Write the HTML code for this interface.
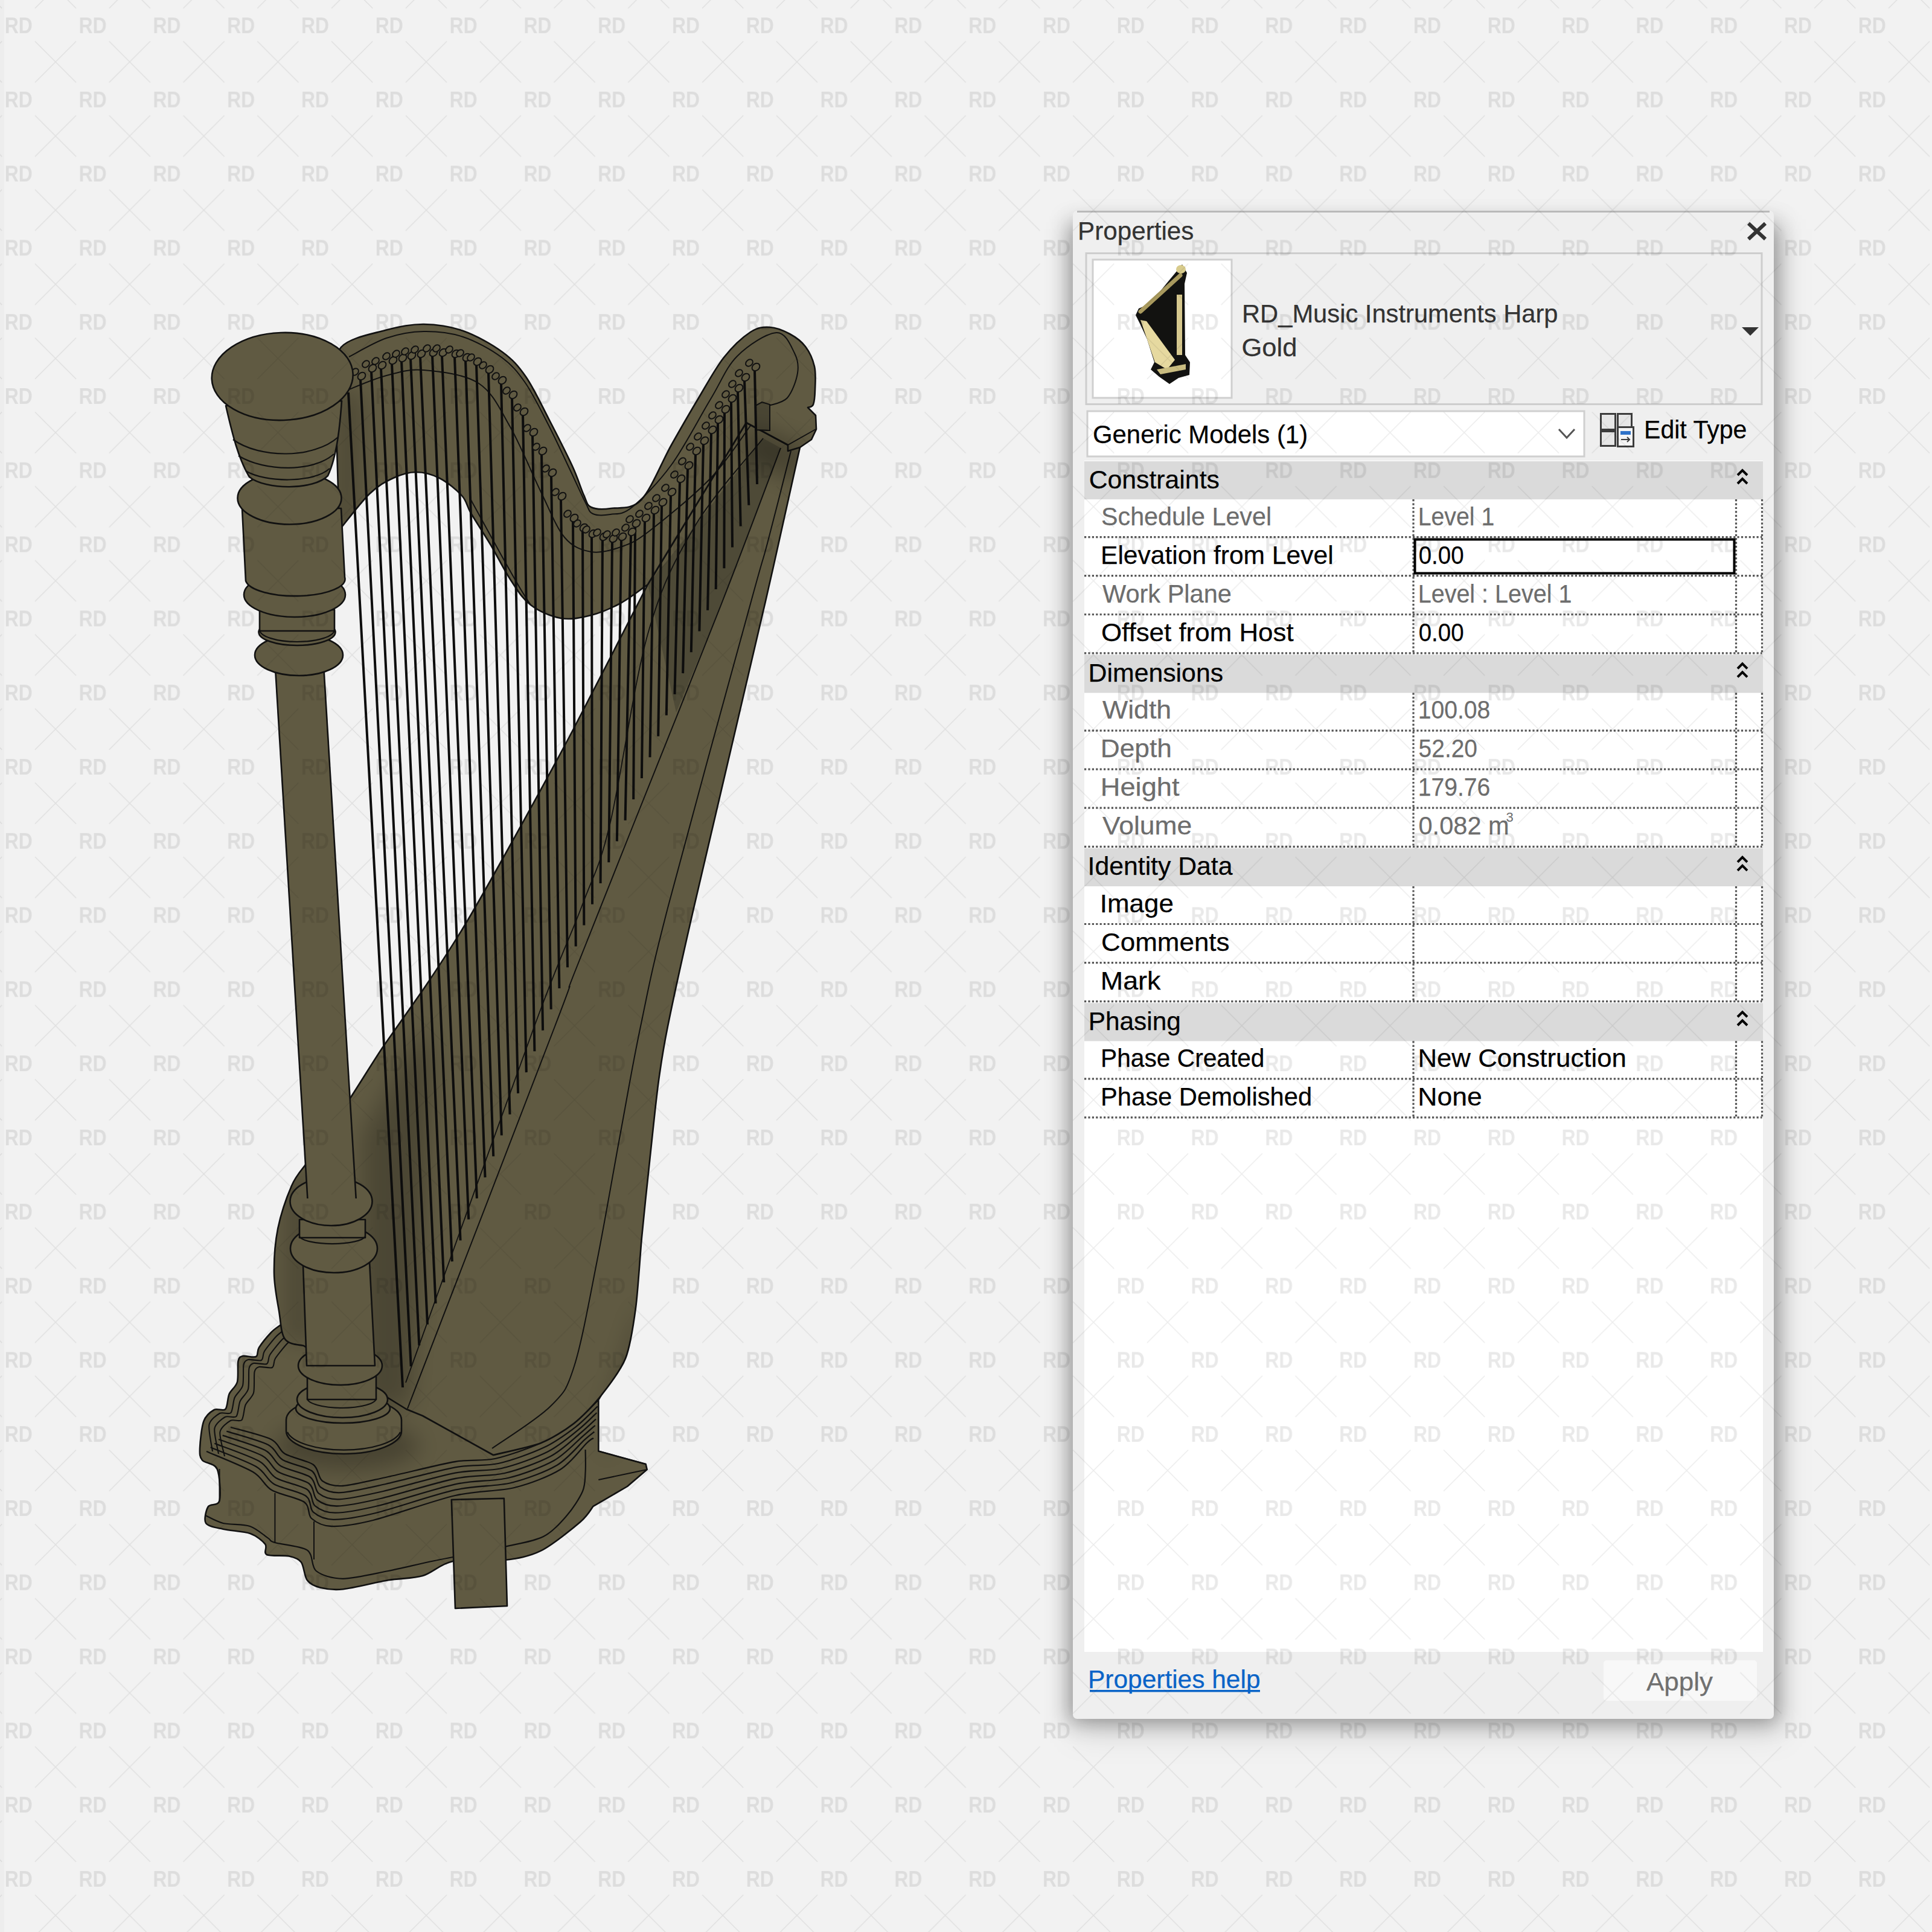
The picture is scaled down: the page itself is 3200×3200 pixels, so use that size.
<!DOCTYPE html>
<html><head><meta charset="utf-8"><style>
html,body{margin:0;padding:0;width:3200px;height:3200px;overflow:hidden;background:#f2f2f2}
svg{position:absolute;left:0;top:0;display:block}
text{font-family:"Liberation Sans",sans-serif}
</style></head><body>
<svg width="3200" height="3200" viewBox="0 0 3200 3200">
<defs>
<pattern id="wm" x="5" y="20" width="122.8" height="122.8" patternUnits="userSpaceOnUse">
<text x="3" y="34.5" font-size="36" font-weight="bold" transform="scale(0.89,1)" fill="#000" fill-opacity="0.085">RD</text>
<path d="M53 48.5 L121 116.5 M121 48.5 L53 116.5" stroke="#000" stroke-opacity="0.075" stroke-width="1.5"/>
</pattern>
<filter id="shd" x="-10%" y="-10%" width="120%" height="120%"><feGaussianBlur stdDeviation="17"/></filter>
<filter id="shd2" x="-10%" y="-10%" width="120%" height="120%"><feGaussianBlur stdDeviation="26"/></filter>
</defs>
<rect width="3200" height="3200" fill="#f2f2f2"/>
<rect x="0" y="0" width="7" height="3200" fill="#000" fill-opacity="0.02"/>
<g id="harp">
<path d="M464.0 2195.0 C461.8 2196.8 454.2 2201.4 449.0 2207.0 C443.8 2212.6 432.8 2226.0 429.0 2232.0 C425.2 2238.0 428.1 2244.9 424.0 2247.0 C419.9 2249.1 406.4 2244.9 402.0 2246.0 C397.6 2247.1 395.9 2248.1 394.5 2254.5 C393.1 2260.9 395.2 2280.8 393.0 2289.0 C390.8 2297.2 382.5 2302.2 379.6 2309.0 C376.7 2315.8 377.1 2330.1 373.4 2334.0 C369.7 2337.9 360.2 2332.0 354.8 2335.0 C349.4 2338.0 341.0 2344.5 337.4 2354.0 C333.8 2363.5 331.4 2388.9 331.0 2398.6 C330.6 2408.3 330.7 2413.3 335.0 2418.5 C339.3 2423.7 355.5 2423.3 359.8 2433.4 C364.1 2443.5 365.8 2476.3 363.5 2485.6 C361.2 2494.9 348.2 2489.9 344.8 2495.5 C341.4 2501.1 337.3 2517.3 341.0 2522.9 C344.7 2528.5 358.7 2530.2 369.7 2532.8 C380.7 2535.4 404.0 2536.3 414.4 2540.0 C424.8 2543.7 435.2 2552.3 439.3 2557.6 C443.4 2562.8 435.7 2572.0 441.7 2575.0 C447.7 2578.0 470.4 2575.6 479.0 2577.5 C487.6 2579.4 494.4 2581.5 498.9 2587.5 C503.4 2593.5 504.0 2611.0 508.8 2617.3 C513.6 2623.6 522.1 2627.5 531.0 2629.7 C539.9 2631.9 551.6 2634.1 568.4 2632.2 C585.2 2630.3 623.3 2620.6 643.0 2617.3 C662.7 2614.0 684.0 2614.7 700.0 2610.0 C716.0 2605.3 729.8 2589.9 750.0 2586.0 C770.2 2582.1 812.9 2586.6 834.8 2584.0 C856.7 2581.4 876.8 2578.1 895.7 2568.7 C914.6 2559.2 948.0 2532.1 961.0 2521.0 C974.0 2509.9 979.4 2498.7 982.6 2494.8 L1039 2462 L1071.7 2434 L1069.6 2425 L991.3 2403.5 L991.3 2318.7 L1026 2260 L800 2250 Z" fill="#605a42" stroke="#111" stroke-width="2.6" stroke-linejoin="round" />
<path d="M382.0 2364.0 C392.1 2367.0 435.5 2377.4 449.0 2384.0 C462.5 2390.6 461.5 2401.7 472.0 2408.0 C482.5 2414.3 509.7 2419.2 519.0 2426.0 C528.3 2432.8 526.6 2447.8 534.0 2453.0 C541.4 2458.2 551.6 2462.1 568.0 2461.0 C584.4 2459.9 615.1 2452.0 643.0 2446.0 C670.9 2440.0 727.5 2425.5 754.0 2421.0 C780.5 2416.5 798.7 2420.7 820.0 2416.0 C841.3 2411.3 876.5 2398.7 896.0 2390.0 C915.5 2381.3 935.8 2368.7 950.0 2358.0 C964.2 2347.3 984.9 2324.8 991.0 2319.0" fill="none" stroke="#111" stroke-width="2.3" stroke-linejoin="round" />
<path d="M375.3 2370.7 C385.6 2374.0 430.1 2385.9 444.0 2393.0 C457.9 2400.1 457.5 2411.5 468.3 2418.0 C479.2 2424.5 507.1 2429.5 516.5 2436.3 C525.9 2443.1 523.8 2458.0 531.0 2463.3 C538.2 2468.7 548.7 2473.0 564.8 2472.2 C581.0 2471.4 610.5 2464.3 638.8 2458.0 C667.2 2451.7 726.0 2435.4 754.0 2430.3 C782.0 2425.2 803.2 2428.9 825.3 2424.0 C847.4 2419.1 882.1 2406.4 901.3 2397.3 C920.6 2388.2 940.4 2373.5 953.7 2363.3 C966.9 2353.2 984.3 2334.6 989.7 2329.5" fill="none" stroke="#111" stroke-width="2.3" stroke-linejoin="round" />
<path d="M368.7 2377.3 C379.2 2381.0 424.6 2394.4 439.0 2402.0 C453.4 2409.6 453.4 2421.3 464.7 2428.0 C475.9 2434.7 504.5 2439.8 514.0 2446.7 C523.5 2453.5 520.9 2468.2 528.0 2473.7 C535.1 2479.2 545.7 2483.9 561.7 2483.3 C577.7 2482.8 605.8 2476.6 634.7 2470.0 C663.5 2463.4 724.6 2445.4 754.0 2439.7 C783.4 2434.0 807.8 2437.2 830.7 2432.0 C853.6 2426.8 887.7 2414.2 906.7 2404.7 C925.7 2395.2 945.1 2378.4 957.3 2368.7 C969.6 2359.0 983.7 2344.3 988.3 2340.0" fill="none" stroke="#111" stroke-width="2.3" stroke-linejoin="round" />
<path d="M362.0 2384.0 C372.8 2388.1 419.1 2402.9 434.0 2411.0 C448.9 2419.1 449.4 2431.1 461.0 2438.0 C472.6 2444.9 501.9 2450.1 511.5 2457.0 C521.1 2463.9 518.0 2478.4 525.0 2484.0 C532.0 2489.6 542.7 2494.8 558.5 2494.5 C574.3 2494.2 601.2 2488.8 630.5 2482.0 C659.8 2475.2 723.2 2455.3 754.0 2449.0 C784.8 2442.7 812.3 2445.6 836.0 2440.0 C859.7 2434.4 893.2 2421.9 912.0 2412.0 C930.8 2402.1 949.8 2383.2 961.0 2374.0 C972.2 2364.8 983.1 2354.0 987.0 2350.5" fill="none" stroke="#111" stroke-width="2.3" stroke-linejoin="round" />
<path d="M355.3 2390.7 C366.4 2395.1 413.7 2411.4 429.0 2420.0 C444.3 2428.6 445.3 2440.9 457.3 2448.0 C469.3 2455.1 499.3 2460.4 509.0 2467.3 C518.7 2474.3 515.0 2488.6 522.0 2494.3 C529.0 2500.1 539.7 2505.7 555.3 2505.7 C571.0 2505.6 596.5 2501.1 626.3 2494.0 C656.1 2486.9 721.8 2465.2 754.0 2458.3 C786.2 2451.4 816.8 2453.8 841.3 2448.0 C865.8 2442.2 898.8 2429.6 917.3 2419.3 C935.8 2409.0 954.4 2388.1 964.7 2379.3 C974.9 2370.6 982.5 2363.8 985.7 2361.0" fill="none" stroke="#111" stroke-width="2.3" stroke-linejoin="round" />
<path d="M348.7 2397.3 C360.0 2402.1 408.2 2419.9 424.0 2429.0 C439.8 2438.1 441.3 2450.7 453.7 2458.0 C466.0 2465.3 496.7 2470.7 506.5 2477.7 C516.3 2484.7 512.1 2498.8 519.0 2504.7 C525.9 2510.5 536.7 2516.6 552.2 2516.8 C567.6 2517.0 591.9 2513.4 622.2 2506.0 C652.4 2498.6 720.3 2475.2 754.0 2467.7 C787.7 2460.2 821.4 2462.2 846.7 2456.0 C872.0 2449.8 904.4 2437.4 922.7 2426.7 C940.9 2416.0 959.1 2392.9 968.3 2384.7 C977.6 2376.4 981.9 2373.5 984.3 2371.5" fill="none" stroke="#111" stroke-width="2.3" stroke-linejoin="round" />
<path d="M342.0 2404.0 C353.6 2409.1 402.8 2428.4 419.0 2438.0 C435.2 2447.6 437.2 2460.5 450.0 2468.0 C462.8 2475.5 494.1 2480.9 504.0 2488.0 C513.9 2495.1 509.2 2509.0 516.0 2515.0 C522.8 2521.0 533.7 2527.6 549.0 2528.0 C564.3 2528.4 587.2 2525.7 618.0 2518.0 C648.8 2510.3 718.9 2485.1 754.0 2477.0 C789.1 2468.9 825.9 2470.4 852.0 2464.0 C878.1 2457.6 910.0 2445.1 928.0 2434.0 C946.0 2422.9 963.8 2397.8 972.0 2390.0 C980.2 2382.2 981.4 2383.2 983.0 2382.0" fill="none" stroke="#111" stroke-width="2.3" stroke-linejoin="round" />
<path d="M473.0 2201.0 C471.0 2202.6 462.7 2208.1 458.0 2213.0 C453.3 2217.9 441.3 2232.7 438.0 2238.0 C434.7 2243.3 436.6 2251.1 433.0 2253.0 C429.4 2254.9 414.9 2251.0 411.0 2252.0 C407.1 2253.0 404.7 2254.8 403.5 2260.5 C402.3 2266.2 404.0 2287.7 402.0 2295.0 C400.0 2302.3 391.2 2309.0 388.6 2315.0 C386.0 2321.0 385.7 2336.5 382.4 2340.0 C379.1 2343.5 368.6 2338.3 363.8 2341.0 C359.0 2343.7 348.0 2351.6 346.4 2360.0 C344.8 2368.4 351.3 2398.1 352.0 2404.0" fill="none" stroke="#111" stroke-width="2.1" stroke-linejoin="round" />
<path d="M482.0 2207.0 C480.0 2208.6 471.7 2214.1 467.0 2219.0 C462.3 2223.9 450.3 2238.7 447.0 2244.0 C443.7 2249.3 445.6 2257.1 442.0 2259.0 C438.4 2260.9 423.9 2257.0 420.0 2258.0 C416.1 2259.0 413.7 2260.8 412.5 2266.5 C411.3 2272.2 413.0 2293.7 411.0 2301.0 C409.0 2308.3 400.2 2315.0 397.6 2321.0 C395.0 2327.0 394.7 2342.5 391.4 2346.0 C388.1 2349.5 377.6 2344.3 372.8 2347.0 C368.0 2349.7 356.8 2357.9 355.4 2366.0 C354.0 2374.1 361.1 2402.4 362.0 2408.0" fill="none" stroke="#111" stroke-width="2.1" stroke-linejoin="round" />
<path d="M491.0 2213.0 C489.0 2214.6 480.7 2220.1 476.0 2225.0 C471.3 2229.9 459.3 2244.7 456.0 2250.0 C452.7 2255.3 454.6 2263.1 451.0 2265.0 C447.4 2266.9 432.9 2263.0 429.0 2264.0 C425.1 2265.0 422.7 2266.8 421.5 2272.5 C420.3 2278.2 422.0 2299.7 420.0 2307.0 C418.0 2314.3 409.2 2321.0 406.6 2327.0 C404.0 2333.0 403.7 2348.5 400.4 2352.0 C397.1 2355.5 386.6 2350.3 381.8 2353.0 C377.0 2355.7 365.7 2364.1 364.4 2372.0 C363.1 2379.9 371.0 2406.7 372.0 2412.0" fill="none" stroke="#111" stroke-width="2.1" stroke-linejoin="round" />
<path d="M363.5 2433.0 L363.5 2486.0" fill="none" stroke="#111" stroke-width="2" stroke-linejoin="round" />
<path d="M455.4 2473.0 L455.4 2555.0" fill="none" stroke="#111" stroke-width="2" stroke-linejoin="round" />
<path d="M520.0 2520.0 L520.0 2583.0" fill="none" stroke="#111" stroke-width="2" stroke-linejoin="round" />
<path d="M341.0 2510.4 C345.3 2512.3 358.8 2520.4 369.7 2523.0 C380.6 2525.6 402.9 2524.3 414.0 2528.0 C425.1 2531.7 437.9 2543.6 444.0 2547.7 C450.1 2551.8 445.2 2552.0 455.0 2555.0 C464.8 2558.0 498.7 2560.5 509.0 2567.6 C519.3 2574.7 514.9 2594.9 523.7 2602.0 C532.6 2609.1 550.1 2614.8 568.0 2614.8 C585.9 2614.8 620.2 2606.5 643.0 2602.0 C665.8 2597.5 691.2 2591.0 720.0 2585.0 C748.8 2579.0 807.8 2568.0 834.8 2562.0 C861.8 2556.0 884.4 2552.8 900.0 2545.0 C915.6 2537.2 929.2 2521.2 939.0 2510.0 C948.8 2498.8 960.4 2480.8 965.0 2470.0 C969.6 2459.2 968.9 2448.3 969.6 2438.0 C970.3 2427.7 969.6 2406.6 969.6 2401.0" fill="none" stroke="#111" stroke-width="2.2" stroke-linejoin="round" />
<path d="M991.3 2403.5 L1069.6 2425.0" fill="none" stroke="#111" stroke-width="2" stroke-linejoin="round" />
<path d="M991.3 2451.0 L1071.7 2434.0" fill="none" stroke="#111" stroke-width="2" stroke-linejoin="round" />
<path d="M747.8 2484.0 L834.8 2481.7 L840.0 2660.0 L754.0 2664.0 Z" fill="#605a42" stroke="#111" stroke-width="2.6" stroke-linejoin="round" />
<path d="M1325.0 741.0 C1317.3 775.5 1290.3 898.8 1267.0 1000.0 C1243.7 1101.2 1171.5 1406.7 1150.0 1500.0 C1128.5 1593.3 1114.0 1660.4 1106.0 1700.0 C1098.0 1739.6 1094.1 1765.9 1090.0 1797.0 C1085.9 1828.1 1078.6 1899.4 1075.0 1933.0 C1071.4 1966.6 1065.9 2017.9 1063.0 2049.0 C1060.1 2080.1 1056.6 2139.2 1053.0 2166.0 C1049.4 2192.8 1043.9 2230.3 1036.0 2250.0 C1028.1 2269.7 1005.0 2299.6 993.5 2314.0 C982.0 2328.4 963.0 2347.9 950.0 2358.0 C937.0 2368.1 913.7 2383.1 896.0 2390.0 C878.3 2396.9 827.5 2407.3 817.0 2410.0 L700 2345 L673 2334 L503 2229  C497.8 2227.2 478.8 2227.7 472.0 2218.0 C465.2 2208.3 465.0 2189.2 462.0 2171.0 C459.0 2152.8 454.3 2131.5 454.0 2109.0 C453.7 2086.5 455.2 2060.2 460.0 2036.0 C464.8 2011.8 475.3 1981.8 483.0 1964.0 C490.7 1946.2 502.2 1934.8 506.0 1929.0  C513.2 1918.3 565.3 1841.3 578.0 1822.0 C590.7 1802.7 620.3 1754.9 633.0 1736.0 C645.7 1717.1 691.3 1653.4 705.0 1633.0 C718.7 1612.6 756.0 1555.3 770.0 1532.0 C784.0 1508.7 827.2 1432.1 845.0 1400.0 C862.8 1367.9 925.2 1254.2 948.0 1211.0 C970.8 1167.8 1060.5 992.3 1073.0 968.0 L1236 700 L1305 737 Z" fill="#605a42" stroke="#111" stroke-width="2.6" stroke-linejoin="round" />
<path d="M1264.0 726.0 L1293.0 742.0 L1195.0 1000.0 L1120.0 1180.0 L1073.0 968.0 L1150.0 873.0 Z" fill="#4e4a37" stroke="none"/>
<path d="M1293.0 742.0 C1276.7 785.0 1235.7 896.0 1195.0 1000.0 C1154.3 1104.0 1089.8 1263.5 1049.0 1366.0 C1008.2 1468.5 971.7 1559.3 950.0 1615.0 C928.3 1670.7 964.8 1580.3 919.0 1700.0 C873.2 1819.7 715.7 2227.5 675.0 2333.0" fill="none" stroke="#111" stroke-width="2" stroke-linejoin="round" />
<path d="M1310.0 747.0 C1303.5 772.5 1282.2 857.8 1271.0 900.0 C1259.8 942.2 1270.3 900.0 1243.0 1000.0 C1215.7 1100.0 1137.3 1383.3 1107.0 1500.0 C1076.7 1616.7 1074.2 1637.5 1061.0 1700.0 C1047.8 1762.5 1040.0 1810.3 1028.0 1875.0 C1016.0 1939.7 1001.8 2023.3 989.0 2088.0 C976.2 2152.7 963.8 2222.8 951.0 2263.0 C938.2 2303.2 934.7 2306.3 912.0 2329.0 C889.3 2351.7 831.2 2387.3 815.0 2399.0" fill="none" stroke="#111" stroke-width="2" stroke-linejoin="round" />
<path d="M1264.0 726.0 C1245.0 750.5 1181.8 819.0 1150.0 873.0 C1118.2 927.0 1096.3 967.8 1073.0 1050.0 C1049.7 1132.2 1028.2 1291.0 1010.0 1366.0 C991.8 1441.0 984.8 1444.3 964.0 1500.0 C943.2 1555.7 933.7 1568.3 885.0 1700.0 C836.3 1831.7 707.5 2191.7 672.0 2290.0" fill="none" stroke="#111" stroke-width="1.8" stroke-linejoin="round" />
<path d="M555.0 640.0 C556.7 629.2 551.2 590.5 565.0 575.0 C578.8 559.5 615.2 553.3 638.0 547.0 C660.8 540.7 680.5 536.8 702.0 537.0 C723.5 537.2 745.3 540.3 767.0 548.0 C788.7 555.7 814.7 570.3 832.0 583.0 C849.3 595.7 858.2 605.5 871.0 624.0 C883.8 642.5 896.2 669.3 909.0 694.0 C921.8 718.7 938.3 751.0 948.0 772.0 C957.7 793.0 961.8 808.7 967.0 820.0 C972.2 831.3 971.5 836.3 979.0 840.0 C986.5 843.7 998.2 844.0 1012.0 842.0 C1025.8 840.0 1045.3 845.5 1062.0 828.0 C1078.7 810.5 1096.3 764.8 1112.0 737.0 C1127.7 709.2 1141.5 685.2 1156.0 661.0 C1170.5 636.8 1184.5 610.5 1199.0 592.0 C1213.5 573.5 1230.3 558.3 1243.0 550.0 C1255.7 541.7 1264.2 541.5 1275.0 542.0 C1285.8 542.5 1298.2 547.7 1308.0 553.0 C1317.8 558.3 1327.2 565.0 1334.0 574.0 C1340.8 583.0 1346.3 595.2 1349.0 607.0 C1351.7 618.8 1350.3 634.5 1350.0 645.0 C1349.7 655.5 1349.0 665.0 1347.0 670.0 C1345.0 675.0 1339.5 674.2 1338.0 675.0 L1351.0 688.0 L1352.0 711.0 L1344.0 728.0 L1325.0 741.0 L1305.0 747.0 L1305.0 737.0 L1236.0 700.0 L1073 968  C1065.5 973.2 1043.7 990.5 1028.0 999.0 C1012.3 1007.5 995.5 1014.8 979.0 1019.0 C962.5 1023.2 945.7 1026.8 929.0 1024.0 C912.3 1021.2 892.8 1012.5 879.0 1002.0 C865.2 991.5 857.0 977.5 846.0 961.0 C835.0 944.5 824.0 921.5 813.0 903.0 C802.0 884.5 788.0 863.7 780.0 850.0 C772.0 836.3 773.7 830.7 765.0 821.0 C756.3 811.3 740.7 798.5 728.0 792.0 C715.3 785.5 701.8 782.0 689.0 782.0 C676.2 782.0 663.8 786.0 651.0 792.0 C638.2 798.0 626.8 803.7 612.0 818.0 C597.2 832.3 570.3 868.0 562.0 878.0 Z" fill="#605a42" stroke="#111" stroke-width="2.6" stroke-linejoin="round" />
<path d="M578.0 591.0 C588.3 585.8 619.3 567.0 640.0 560.0 C660.7 553.0 680.8 549.3 702.0 549.0 C723.2 548.7 745.5 550.8 767.0 558.0 C788.5 565.2 813.8 579.3 831.0 592.0 C848.2 604.7 857.2 615.5 870.0 634.0 C882.8 652.5 895.5 678.7 908.0 703.0 C920.5 727.3 934.7 758.3 945.0 780.0 C955.3 801.7 963.8 821.2 970.0 833.0 C976.2 844.8 975.2 847.8 982.0 851.0 C988.8 854.2 1000.2 853.8 1011.0 852.0 C1021.8 850.2 1030.2 853.7 1047.0 840.0 C1063.8 826.3 1090.3 799.8 1112.0 770.0 C1133.7 740.2 1158.8 691.0 1177.0 661.0 C1195.2 631.0 1202.8 608.3 1221.0 590.0 C1239.2 571.7 1270.2 551.8 1286.0 551.0 C1301.8 550.2 1310.2 573.8 1316.0 585.0 C1321.8 596.2 1323.0 605.7 1321.0 618.0 C1319.0 630.3 1312.0 650.0 1304.0 659.0 C1296.0 668.0 1278.2 669.8 1273.0 672.0" fill="none" stroke="#111" stroke-width="2" stroke-linejoin="round" />
<path d="M578.0 645.0 C588.3 641.2 619.3 627.3 640.0 622.0 C660.7 616.7 676.5 610.8 702.0 613.0 C727.5 615.2 769.2 619.3 793.0 635.0 C816.8 650.7 827.8 677.0 845.0 707.0 C862.2 737.0 881.0 784.5 896.0 815.0 C911.0 845.5 921.2 873.5 935.0 890.0 C948.8 906.5 963.5 911.3 979.0 914.0 C994.5 916.7 1012.0 911.7 1028.0 906.0 C1044.0 900.3 1050.2 899.0 1075.0 880.0 C1099.8 861.0 1149.0 821.2 1177.0 792.0 C1205.0 762.8 1232.0 719.5 1243.0 705.0" fill="none" stroke="#111" stroke-width="2" stroke-linejoin="round" />
<path d="M780.0 828.0 C788.3 843.2 816.2 894.2 830.0 919.0 C843.8 943.8 854.8 963.2 863.0 977.0 C871.2 990.8 876.3 997.8 879.0 1002.0" fill="none" stroke="#111" stroke-width="2" stroke-linejoin="round" />
<path d="M1236.0 700.0 L1305.0 737.0 L1351.0 711.0" fill="none" stroke="#111" stroke-width="2" stroke-linejoin="round" />
<path d="M1251.0 712.0 L1251.0 672.0 L1262.0 666.0 L1275.0 670.0 L1275.0 713.0 Z" fill="#4a4634" stroke="#111" stroke-width="2"/>
<defs><clipPath id="hclip"><path d="M464.0 2195.0 C461.8 2196.8 454.2 2201.4 449.0 2207.0 C443.8 2212.6 432.8 2226.0 429.0 2232.0 C425.2 2238.0 428.1 2244.9 424.0 2247.0 C419.9 2249.1 406.4 2244.9 402.0 2246.0 C397.6 2247.1 395.9 2248.1 394.5 2254.5 C393.1 2260.9 395.2 2280.8 393.0 2289.0 C390.8 2297.2 382.5 2302.2 379.6 2309.0 C376.7 2315.8 377.1 2330.1 373.4 2334.0 C369.7 2337.9 360.2 2332.0 354.8 2335.0 C349.4 2338.0 341.0 2344.5 337.4 2354.0 C333.8 2363.5 331.4 2388.9 331.0 2398.6 C330.6 2408.3 330.7 2413.3 335.0 2418.5 C339.3 2423.7 355.5 2423.3 359.8 2433.4 C364.1 2443.5 365.8 2476.3 363.5 2485.6 C361.2 2494.9 348.2 2489.9 344.8 2495.5 C341.4 2501.1 337.3 2517.3 341.0 2522.9 C344.7 2528.5 358.7 2530.2 369.7 2532.8 C380.7 2535.4 404.0 2536.3 414.4 2540.0 C424.8 2543.7 435.2 2552.3 439.3 2557.6 C443.4 2562.8 435.7 2572.0 441.7 2575.0 C447.7 2578.0 470.4 2575.6 479.0 2577.5 C487.6 2579.4 494.4 2581.5 498.9 2587.5 C503.4 2593.5 504.0 2611.0 508.8 2617.3 C513.6 2623.6 522.1 2627.5 531.0 2629.7 C539.9 2631.9 551.6 2634.1 568.4 2632.2 C585.2 2630.3 623.3 2620.6 643.0 2617.3 C662.7 2614.0 684.0 2614.7 700.0 2610.0 C716.0 2605.3 729.8 2589.9 750.0 2586.0 C770.2 2582.1 812.9 2586.6 834.8 2584.0 C856.7 2581.4 876.8 2578.1 895.7 2568.7 C914.6 2559.2 948.0 2532.1 961.0 2521.0 C974.0 2509.9 979.4 2498.7 982.6 2494.8 L1039 2462 L1071.7 2434 L1069.6 2425 L991.3 2403.5 L991.3 2318.7 L1026 2260 L800 2250 Z"/><path d="M1325.0 741.0 C1317.3 775.5 1290.3 898.8 1267.0 1000.0 C1243.7 1101.2 1171.5 1406.7 1150.0 1500.0 C1128.5 1593.3 1114.0 1660.4 1106.0 1700.0 C1098.0 1739.6 1094.1 1765.9 1090.0 1797.0 C1085.9 1828.1 1078.6 1899.4 1075.0 1933.0 C1071.4 1966.6 1065.9 2017.9 1063.0 2049.0 C1060.1 2080.1 1056.6 2139.2 1053.0 2166.0 C1049.4 2192.8 1043.9 2230.3 1036.0 2250.0 C1028.1 2269.7 1005.0 2299.6 993.5 2314.0 C982.0 2328.4 963.0 2347.9 950.0 2358.0 C937.0 2368.1 913.7 2383.1 896.0 2390.0 C878.3 2396.9 827.5 2407.3 817.0 2410.0 L700 2345 L673 2334 L503 2229  C497.8 2227.2 478.8 2227.7 472.0 2218.0 C465.2 2208.3 465.0 2189.2 462.0 2171.0 C459.0 2152.8 454.3 2131.5 454.0 2109.0 C453.7 2086.5 455.2 2060.2 460.0 2036.0 C464.8 2011.8 475.3 1981.8 483.0 1964.0 C490.7 1946.2 502.2 1934.8 506.0 1929.0  C513.2 1918.3 565.3 1841.3 578.0 1822.0 C590.7 1802.7 620.3 1754.9 633.0 1736.0 C645.7 1717.1 691.3 1653.4 705.0 1633.0 C718.7 1612.6 756.0 1555.3 770.0 1532.0 C784.0 1508.7 827.2 1432.1 845.0 1400.0 C862.8 1367.9 925.2 1254.2 948.0 1211.0 C970.8 1167.8 1060.5 992.3 1073.0 968.0 L1236 700 L1305 737 Z"/><path d="M555.0 640.0 C556.7 629.2 551.2 590.5 565.0 575.0 C578.8 559.5 615.2 553.3 638.0 547.0 C660.8 540.7 680.5 536.8 702.0 537.0 C723.5 537.2 745.3 540.3 767.0 548.0 C788.7 555.7 814.7 570.3 832.0 583.0 C849.3 595.7 858.2 605.5 871.0 624.0 C883.8 642.5 896.2 669.3 909.0 694.0 C921.8 718.7 938.3 751.0 948.0 772.0 C957.7 793.0 961.8 808.7 967.0 820.0 C972.2 831.3 971.5 836.3 979.0 840.0 C986.5 843.7 998.2 844.0 1012.0 842.0 C1025.8 840.0 1045.3 845.5 1062.0 828.0 C1078.7 810.5 1096.3 764.8 1112.0 737.0 C1127.7 709.2 1141.5 685.2 1156.0 661.0 C1170.5 636.8 1184.5 610.5 1199.0 592.0 C1213.5 573.5 1230.3 558.3 1243.0 550.0 C1255.7 541.7 1264.2 541.5 1275.0 542.0 C1285.8 542.5 1298.2 547.7 1308.0 553.0 C1317.8 558.3 1327.2 565.0 1334.0 574.0 C1340.8 583.0 1346.3 595.2 1349.0 607.0 C1351.7 618.8 1350.3 634.5 1350.0 645.0 C1349.7 655.5 1349.0 665.0 1347.0 670.0 C1345.0 675.0 1339.5 674.2 1338.0 675.0 L1351.0 688.0 L1352.0 711.0 L1344.0 728.0 L1325.0 741.0 L1305.0 747.0 L1305.0 737.0 L1236.0 700.0 L1073 968  C1065.5 973.2 1043.7 990.5 1028.0 999.0 C1012.3 1007.5 995.5 1014.8 979.0 1019.0 C962.5 1023.2 945.7 1026.8 929.0 1024.0 C912.3 1021.2 892.8 1012.5 879.0 1002.0 C865.2 991.5 857.0 977.5 846.0 961.0 C835.0 944.5 824.0 921.5 813.0 903.0 C802.0 884.5 788.0 863.7 780.0 850.0 C772.0 836.3 773.7 830.7 765.0 821.0 C756.3 811.3 740.7 798.5 728.0 792.0 C715.3 785.5 701.8 782.0 689.0 782.0 C676.2 782.0 663.8 786.0 651.0 792.0 C638.2 798.0 626.8 803.7 612.0 818.0 C597.2 832.3 570.3 868.0 562.0 878.0 Z"/></clipPath><filter id="aob" x="-50%" y="-50%" width="200%" height="200%"><feGaussianBlur stdDeviation="18"/></filter></defs>
<g clip-path="url(#hclip)"><g filter="url(#aob)" fill="#000">
<path d="M600 1880 L700 1700 L720 1760 L680 2330 L600 2330 Z" fill-opacity="0.22"/>
<path d="M470 1960 L520 1940 L520 2230 L470 2220 Z" fill-opacity="0.18"/>
<ellipse cx="575" cy="2395" rx="120" ry="40" fill-opacity="0.25"/>
<path d="M1240 700 L1340 740 L1320 800 L1230 760 Z" fill-opacity="0.25"/>
<path d="M560 640 L600 660 L590 880 L555 880 Z" fill-opacity="0.2"/>
<path d="M1000 2330 L1060 2150 L1080 2300 L1000 2420 Z" fill-opacity="0.15"/>
</g></g>
<path d="M577.0 650.0 L667.0 2298.0 M597.0 628.0 L680.7 2263.2 M615.0 615.0 L694.3 2228.4 M631.0 610.0 L708.0 2193.6 M649.0 602.0 L721.6 2158.8 M665.0 598.0 L735.3 2124.0 M680.0 594.0 L748.9 2089.3 M696.0 591.0 L762.6 2054.5 M716.0 589.0 L776.2 2019.7 M732.0 589.0 L789.9 1984.9 M753.0 591.0 L803.5 1950.1 M771.0 597.0 L817.2 1915.3 M789.0 604.0 L830.8 1880.5 M809.0 617.0 L844.5 1845.7 M830.0 635.0 L858.1 1810.9 M848.0 659.0 L871.8 1776.1 M866.0 687.0 L885.4 1741.3 M882.0 721.0 L899.1 1706.6 M897.0 752.0 L912.7 1671.8 M913.0 788.0 L926.4 1637.0 M929.0 827.0 L940.0 1602.2 M949.0 863.0 L953.7 1567.4 M965.0 879.0 L967.3 1532.6 M980.0 889.0 L981.0 1497.8 M998.0 894.0 L994.6 1463.0 M1014.0 897.0 L1008.3 1428.2 M1029.0 894.0 L1021.9 1393.4 M1045.0 886.0 L1035.6 1358.7 M1052.0 872.0 L1049.2 1323.9 M1068.0 863.0 L1062.9 1289.1 M1083.0 850.0 L1076.5 1254.3 M1096.0 837.0 L1090.2 1219.5 M1111.0 820.0 L1103.8 1184.7 M1126.0 798.0 L1117.5 1149.9 M1139.0 776.0 L1131.1 1115.1 M1152.0 752.0 L1144.8 1080.3 M1165.0 735.0 L1158.4 1045.5 M1178.0 717.0 L1172.1 1010.7 M1189.0 700.0 L1185.7 976.0 M1200.0 683.0 L1199.4 941.2 M1211.0 665.0 L1213.0 906.4 M1222.0 648.0 L1226.7 871.6 M1233.0 630.0 L1240.3 836.8 M1250.0 613.0 L1254.0 802.0" stroke="#0d0d0d" stroke-width="4" fill="none"/>
<ellipse cx="588.0" cy="616.0" rx="6.5" ry="5" transform="rotate(-40 588.0 616.0)" fill="#605a42" stroke="#111" stroke-width="2"/>
<ellipse cx="599.0" cy="623.0" rx="7" ry="5.5" transform="rotate(-40 599.0 623.0)" fill="#605a42" stroke="#111" stroke-width="2"/>
<ellipse cx="606.0" cy="603.0" rx="6.5" ry="5" transform="rotate(-40 606.0 603.0)" fill="#605a42" stroke="#111" stroke-width="2"/>
<ellipse cx="617.0" cy="610.0" rx="7" ry="5.5" transform="rotate(-40 617.0 610.0)" fill="#605a42" stroke="#111" stroke-width="2"/>
<ellipse cx="622.0" cy="598.0" rx="6.5" ry="5" transform="rotate(-40 622.0 598.0)" fill="#605a42" stroke="#111" stroke-width="2"/>
<ellipse cx="633.0" cy="605.0" rx="7" ry="5.5" transform="rotate(-40 633.0 605.0)" fill="#605a42" stroke="#111" stroke-width="2"/>
<ellipse cx="640.0" cy="590.0" rx="6.5" ry="5" transform="rotate(-40 640.0 590.0)" fill="#605a42" stroke="#111" stroke-width="2"/>
<ellipse cx="651.0" cy="597.0" rx="7" ry="5.5" transform="rotate(-40 651.0 597.0)" fill="#605a42" stroke="#111" stroke-width="2"/>
<ellipse cx="656.0" cy="586.0" rx="6.5" ry="5" transform="rotate(-40 656.0 586.0)" fill="#605a42" stroke="#111" stroke-width="2"/>
<ellipse cx="667.0" cy="593.0" rx="7" ry="5.5" transform="rotate(-40 667.0 593.0)" fill="#605a42" stroke="#111" stroke-width="2"/>
<ellipse cx="671.0" cy="582.0" rx="6.5" ry="5" transform="rotate(-40 671.0 582.0)" fill="#605a42" stroke="#111" stroke-width="2"/>
<ellipse cx="682.0" cy="589.0" rx="7" ry="5.5" transform="rotate(-40 682.0 589.0)" fill="#605a42" stroke="#111" stroke-width="2"/>
<ellipse cx="687.0" cy="579.0" rx="6.5" ry="5" transform="rotate(-40 687.0 579.0)" fill="#605a42" stroke="#111" stroke-width="2"/>
<ellipse cx="698.0" cy="586.0" rx="7" ry="5.5" transform="rotate(-40 698.0 586.0)" fill="#605a42" stroke="#111" stroke-width="2"/>
<ellipse cx="707.0" cy="577.0" rx="6.5" ry="5" transform="rotate(-40 707.0 577.0)" fill="#605a42" stroke="#111" stroke-width="2"/>
<ellipse cx="718.0" cy="584.0" rx="7" ry="5.5" transform="rotate(-40 718.0 584.0)" fill="#605a42" stroke="#111" stroke-width="2"/>
<ellipse cx="723.0" cy="577.0" rx="6.5" ry="5" transform="rotate(-40 723.0 577.0)" fill="#605a42" stroke="#111" stroke-width="2"/>
<ellipse cx="734.0" cy="584.0" rx="7" ry="5.5" transform="rotate(-40 734.0 584.0)" fill="#605a42" stroke="#111" stroke-width="2"/>
<ellipse cx="744.0" cy="579.0" rx="6.5" ry="5" transform="rotate(-40 744.0 579.0)" fill="#605a42" stroke="#111" stroke-width="2"/>
<ellipse cx="755.0" cy="586.0" rx="7" ry="5.5" transform="rotate(-40 755.0 586.0)" fill="#605a42" stroke="#111" stroke-width="2"/>
<ellipse cx="762.0" cy="585.0" rx="6.5" ry="5" transform="rotate(-40 762.0 585.0)" fill="#605a42" stroke="#111" stroke-width="2"/>
<ellipse cx="773.0" cy="592.0" rx="7" ry="5.5" transform="rotate(-40 773.0 592.0)" fill="#605a42" stroke="#111" stroke-width="2"/>
<ellipse cx="780.0" cy="592.0" rx="6.5" ry="5" transform="rotate(-40 780.0 592.0)" fill="#605a42" stroke="#111" stroke-width="2"/>
<ellipse cx="791.0" cy="599.0" rx="7" ry="5.5" transform="rotate(-40 791.0 599.0)" fill="#605a42" stroke="#111" stroke-width="2"/>
<ellipse cx="800.0" cy="605.0" rx="6.5" ry="5" transform="rotate(-40 800.0 605.0)" fill="#605a42" stroke="#111" stroke-width="2"/>
<ellipse cx="811.0" cy="612.0" rx="7" ry="5.5" transform="rotate(-40 811.0 612.0)" fill="#605a42" stroke="#111" stroke-width="2"/>
<ellipse cx="821.0" cy="623.0" rx="6.5" ry="5" transform="rotate(-40 821.0 623.0)" fill="#605a42" stroke="#111" stroke-width="2"/>
<ellipse cx="832.0" cy="630.0" rx="7" ry="5.5" transform="rotate(-40 832.0 630.0)" fill="#605a42" stroke="#111" stroke-width="2"/>
<ellipse cx="839.0" cy="647.0" rx="6.5" ry="5" transform="rotate(-40 839.0 647.0)" fill="#605a42" stroke="#111" stroke-width="2"/>
<ellipse cx="850.0" cy="654.0" rx="7" ry="5.5" transform="rotate(-40 850.0 654.0)" fill="#605a42" stroke="#111" stroke-width="2"/>
<ellipse cx="857.0" cy="675.0" rx="6.5" ry="5" transform="rotate(-40 857.0 675.0)" fill="#605a42" stroke="#111" stroke-width="2"/>
<ellipse cx="868.0" cy="682.0" rx="7" ry="5.5" transform="rotate(-40 868.0 682.0)" fill="#605a42" stroke="#111" stroke-width="2"/>
<ellipse cx="873.0" cy="709.0" rx="6.5" ry="5" transform="rotate(-40 873.0 709.0)" fill="#605a42" stroke="#111" stroke-width="2"/>
<ellipse cx="884.0" cy="716.0" rx="7" ry="5.5" transform="rotate(-40 884.0 716.0)" fill="#605a42" stroke="#111" stroke-width="2"/>
<ellipse cx="888.0" cy="740.0" rx="6.5" ry="5" transform="rotate(-40 888.0 740.0)" fill="#605a42" stroke="#111" stroke-width="2"/>
<ellipse cx="899.0" cy="747.0" rx="7" ry="5.5" transform="rotate(-40 899.0 747.0)" fill="#605a42" stroke="#111" stroke-width="2"/>
<ellipse cx="904.0" cy="776.0" rx="6.5" ry="5" transform="rotate(-40 904.0 776.0)" fill="#605a42" stroke="#111" stroke-width="2"/>
<ellipse cx="915.0" cy="783.0" rx="7" ry="5.5" transform="rotate(-40 915.0 783.0)" fill="#605a42" stroke="#111" stroke-width="2"/>
<ellipse cx="920.0" cy="815.0" rx="6.5" ry="5" transform="rotate(-40 920.0 815.0)" fill="#605a42" stroke="#111" stroke-width="2"/>
<ellipse cx="931.0" cy="822.0" rx="7" ry="5.5" transform="rotate(-40 931.0 822.0)" fill="#605a42" stroke="#111" stroke-width="2"/>
<ellipse cx="940.0" cy="851.0" rx="6.5" ry="5" transform="rotate(-40 940.0 851.0)" fill="#605a42" stroke="#111" stroke-width="2"/>
<ellipse cx="951.0" cy="858.0" rx="7" ry="5.5" transform="rotate(-40 951.0 858.0)" fill="#605a42" stroke="#111" stroke-width="2"/>
<ellipse cx="956.0" cy="867.0" rx="6.5" ry="5" transform="rotate(-40 956.0 867.0)" fill="#605a42" stroke="#111" stroke-width="2"/>
<ellipse cx="967.0" cy="874.0" rx="7" ry="5.5" transform="rotate(-40 967.0 874.0)" fill="#605a42" stroke="#111" stroke-width="2"/>
<ellipse cx="971.0" cy="877.0" rx="6.5" ry="5" transform="rotate(-40 971.0 877.0)" fill="#605a42" stroke="#111" stroke-width="2"/>
<ellipse cx="982.0" cy="884.0" rx="7" ry="5.5" transform="rotate(-40 982.0 884.0)" fill="#605a42" stroke="#111" stroke-width="2"/>
<ellipse cx="989.0" cy="882.0" rx="6.5" ry="5" transform="rotate(-40 989.0 882.0)" fill="#605a42" stroke="#111" stroke-width="2"/>
<ellipse cx="1000.0" cy="889.0" rx="7" ry="5.5" transform="rotate(-40 1000.0 889.0)" fill="#605a42" stroke="#111" stroke-width="2"/>
<ellipse cx="1005.0" cy="885.0" rx="6.5" ry="5" transform="rotate(-40 1005.0 885.0)" fill="#605a42" stroke="#111" stroke-width="2"/>
<ellipse cx="1016.0" cy="892.0" rx="7" ry="5.5" transform="rotate(-40 1016.0 892.0)" fill="#605a42" stroke="#111" stroke-width="2"/>
<ellipse cx="1020.0" cy="882.0" rx="6.5" ry="5" transform="rotate(-40 1020.0 882.0)" fill="#605a42" stroke="#111" stroke-width="2"/>
<ellipse cx="1031.0" cy="889.0" rx="7" ry="5.5" transform="rotate(-40 1031.0 889.0)" fill="#605a42" stroke="#111" stroke-width="2"/>
<ellipse cx="1036.0" cy="874.0" rx="6.5" ry="5" transform="rotate(-40 1036.0 874.0)" fill="#605a42" stroke="#111" stroke-width="2"/>
<ellipse cx="1047.0" cy="881.0" rx="7" ry="5.5" transform="rotate(-40 1047.0 881.0)" fill="#605a42" stroke="#111" stroke-width="2"/>
<ellipse cx="1043.0" cy="860.0" rx="6.5" ry="5" transform="rotate(-40 1043.0 860.0)" fill="#605a42" stroke="#111" stroke-width="2"/>
<ellipse cx="1054.0" cy="867.0" rx="7" ry="5.5" transform="rotate(-40 1054.0 867.0)" fill="#605a42" stroke="#111" stroke-width="2"/>
<ellipse cx="1059.0" cy="851.0" rx="6.5" ry="5" transform="rotate(-40 1059.0 851.0)" fill="#605a42" stroke="#111" stroke-width="2"/>
<ellipse cx="1070.0" cy="858.0" rx="7" ry="5.5" transform="rotate(-40 1070.0 858.0)" fill="#605a42" stroke="#111" stroke-width="2"/>
<ellipse cx="1074.0" cy="838.0" rx="6.5" ry="5" transform="rotate(-40 1074.0 838.0)" fill="#605a42" stroke="#111" stroke-width="2"/>
<ellipse cx="1085.0" cy="845.0" rx="7" ry="5.5" transform="rotate(-40 1085.0 845.0)" fill="#605a42" stroke="#111" stroke-width="2"/>
<ellipse cx="1087.0" cy="825.0" rx="6.5" ry="5" transform="rotate(-40 1087.0 825.0)" fill="#605a42" stroke="#111" stroke-width="2"/>
<ellipse cx="1098.0" cy="832.0" rx="7" ry="5.5" transform="rotate(-40 1098.0 832.0)" fill="#605a42" stroke="#111" stroke-width="2"/>
<ellipse cx="1102.0" cy="808.0" rx="6.5" ry="5" transform="rotate(-40 1102.0 808.0)" fill="#605a42" stroke="#111" stroke-width="2"/>
<ellipse cx="1113.0" cy="815.0" rx="7" ry="5.5" transform="rotate(-40 1113.0 815.0)" fill="#605a42" stroke="#111" stroke-width="2"/>
<ellipse cx="1117.0" cy="786.0" rx="6.5" ry="5" transform="rotate(-40 1117.0 786.0)" fill="#605a42" stroke="#111" stroke-width="2"/>
<ellipse cx="1128.0" cy="793.0" rx="7" ry="5.5" transform="rotate(-40 1128.0 793.0)" fill="#605a42" stroke="#111" stroke-width="2"/>
<ellipse cx="1130.0" cy="764.0" rx="6.5" ry="5" transform="rotate(-40 1130.0 764.0)" fill="#605a42" stroke="#111" stroke-width="2"/>
<ellipse cx="1141.0" cy="771.0" rx="7" ry="5.5" transform="rotate(-40 1141.0 771.0)" fill="#605a42" stroke="#111" stroke-width="2"/>
<ellipse cx="1143.0" cy="740.0" rx="6.5" ry="5" transform="rotate(-40 1143.0 740.0)" fill="#605a42" stroke="#111" stroke-width="2"/>
<ellipse cx="1154.0" cy="747.0" rx="7" ry="5.5" transform="rotate(-40 1154.0 747.0)" fill="#605a42" stroke="#111" stroke-width="2"/>
<ellipse cx="1156.0" cy="723.0" rx="6.5" ry="5" transform="rotate(-40 1156.0 723.0)" fill="#605a42" stroke="#111" stroke-width="2"/>
<ellipse cx="1167.0" cy="730.0" rx="7" ry="5.5" transform="rotate(-40 1167.0 730.0)" fill="#605a42" stroke="#111" stroke-width="2"/>
<ellipse cx="1169.0" cy="705.0" rx="6.5" ry="5" transform="rotate(-40 1169.0 705.0)" fill="#605a42" stroke="#111" stroke-width="2"/>
<ellipse cx="1180.0" cy="712.0" rx="7" ry="5.5" transform="rotate(-40 1180.0 712.0)" fill="#605a42" stroke="#111" stroke-width="2"/>
<ellipse cx="1180.0" cy="688.0" rx="6.5" ry="5" transform="rotate(-40 1180.0 688.0)" fill="#605a42" stroke="#111" stroke-width="2"/>
<ellipse cx="1191.0" cy="695.0" rx="7" ry="5.5" transform="rotate(-40 1191.0 695.0)" fill="#605a42" stroke="#111" stroke-width="2"/>
<ellipse cx="1191.0" cy="671.0" rx="6.5" ry="5" transform="rotate(-40 1191.0 671.0)" fill="#605a42" stroke="#111" stroke-width="2"/>
<ellipse cx="1202.0" cy="678.0" rx="7" ry="5.5" transform="rotate(-40 1202.0 678.0)" fill="#605a42" stroke="#111" stroke-width="2"/>
<ellipse cx="1202.0" cy="653.0" rx="6.5" ry="5" transform="rotate(-40 1202.0 653.0)" fill="#605a42" stroke="#111" stroke-width="2"/>
<ellipse cx="1213.0" cy="660.0" rx="7" ry="5.5" transform="rotate(-40 1213.0 660.0)" fill="#605a42" stroke="#111" stroke-width="2"/>
<ellipse cx="1213.0" cy="636.0" rx="6.5" ry="5" transform="rotate(-40 1213.0 636.0)" fill="#605a42" stroke="#111" stroke-width="2"/>
<ellipse cx="1224.0" cy="643.0" rx="7" ry="5.5" transform="rotate(-40 1224.0 643.0)" fill="#605a42" stroke="#111" stroke-width="2"/>
<ellipse cx="1224.0" cy="618.0" rx="6.5" ry="5" transform="rotate(-40 1224.0 618.0)" fill="#605a42" stroke="#111" stroke-width="2"/>
<ellipse cx="1235.0" cy="625.0" rx="7" ry="5.5" transform="rotate(-40 1235.0 625.0)" fill="#605a42" stroke="#111" stroke-width="2"/>
<ellipse cx="1241.0" cy="601.0" rx="6.5" ry="5" transform="rotate(-40 1241.0 601.0)" fill="#605a42" stroke="#111" stroke-width="2"/>
<ellipse cx="1252.0" cy="608.0" rx="7" ry="5.5" transform="rotate(-40 1252.0 608.0)" fill="#605a42" stroke="#111" stroke-width="2"/>
<path d="M474.0 2352.0 L474.0 2370.0 A95.5 38.0 0 0 0 665.0 2370.0 L665.0 2352.0 A95.5 38.0 0 0 0 474.0 2352.0 Z" fill="#605a42" stroke="#111" stroke-width="2.6" stroke-linejoin="round" />
<path d="M476 2372 A95 36 0 0 0 663 2372" fill="none" stroke="#111" stroke-width="2.2" stroke-linejoin="round" />
<ellipse cx="568.0" cy="2333.0" rx="78.0" ry="24.0" fill="#605a42" stroke="#111" stroke-width="2.6"/>
<ellipse cx="567.0" cy="2318.0" rx="75.0" ry="30.0" fill="#605a42" stroke="#111" stroke-width="2.6"/>
<path d="M509.0 2275.0 L623.0 2275.0 L623.0 2318.0 L509.0 2318.0 Z" fill="#605a42" stroke="#111" stroke-width="2.6" stroke-linejoin="round" />
<path d="M509 2316 A57 16 0 0 0 623 2316" fill="none" stroke="#111" stroke-width="2.2" stroke-linejoin="round" />
<ellipse cx="563.5" cy="2262.0" rx="69.5" ry="32.0" fill="#605a42" stroke="#111" stroke-width="2.6"/>
<path d="M502.0 2096.0 L612.0 2090.0 L621.0 2262.0 L508.0 2262.0 Z" fill="#605a42" stroke="#111" stroke-width="2.6" stroke-linejoin="round" />
<ellipse cx="553.0" cy="2068.0" rx="72.0" ry="40.0" fill="#605a42" stroke="#111" stroke-width="2.6"/>
<path d="M496.0 2020.0 L605.0 2020.0 L605.0 2050.0 L496.0 2050.0 Z" fill="#605a42" stroke="#111" stroke-width="2.6" stroke-linejoin="round" />
<path d="M496 2048 A55 14 0 0 0 605 2048" fill="none" stroke="#111" stroke-width="2.2" stroke-linejoin="round" />
<ellipse cx="548.5" cy="1990.0" rx="68.0" ry="40.0" fill="#605a42" stroke="#111" stroke-width="2.6"/>
<path d="M455.6 1100.0 L535.9 1100.0 L589.7 1985.0 L509.4 1985.0 Z" fill="#605a42" stroke="none"/>
<path d="M455.6 1100.0 L509.4 1985.0" fill="none" stroke="#111" stroke-width="2.6" stroke-linejoin="round" />
<path d="M535.9 1100.0 L589.7 1985.0" fill="none" stroke="#111" stroke-width="2.6" stroke-linejoin="round" />
<ellipse cx="495.0" cy="1085.0" rx="73.0" ry="34.0" fill="#605a42" stroke="#111" stroke-width="2.6"/>
<ellipse cx="492.0" cy="1047.0" rx="63.5" ry="22.0" fill="#605a42" stroke="#111" stroke-width="2.6"/>
<path d="M430.0 1010.0 L554.0 1010.0 L554.0 1045.0 L430.0 1045.0 Z" fill="#605a42" stroke="#111" stroke-width="2.6" stroke-linejoin="round" />
<path d="M430 1043 A62 20 0 0 0 554 1043" fill="none" stroke="#111" stroke-width="2.2" stroke-linejoin="round" />
<ellipse cx="488.0" cy="985.0" rx="84.0" ry="37.0" fill="#605a42" stroke="#111" stroke-width="2.6"/>
<path d="M401 842 L407 962 A82 28 0 0 0 571 956 L565 842 Z" fill="#605a42" stroke="#111" stroke-width="2.6" stroke-linejoin="round" />
<ellipse cx="479.5" cy="825.0" rx="86.0" ry="43.5" fill="#605a42" stroke="#111" stroke-width="2.6"/>
<path d="M374 672 C385 720 395 760 413 790 C440 812 520 812 543 788 C556 760 562 720 566 664 Z" fill="#605a42" stroke="#111" stroke-width="2.6" stroke-linejoin="round" />
<path d="M386 728 C430 760 520 760 560 724" fill="none" stroke="#111" stroke-width="2.2" stroke-linejoin="round" />
<path d="M395 755 C440 782 520 782 553 752" fill="none" stroke="#111" stroke-width="2.2" stroke-linejoin="round" />
<path d="M407 780 C440 800 520 800 546 776" fill="none" stroke="#111" stroke-width="2.2" stroke-linejoin="round" />
<ellipse cx="467.7" cy="623.5" rx="117" ry="72.5" transform="rotate(-2 467.7 623.5)" fill="#605a42" stroke="#111" stroke-width="2.6"/>
</g>
<rect x="1770" y="368" width="1175" height="2485" fill="#000" fill-opacity="0.34" filter="url(#shd)"/>
<rect x="1780" y="380" width="1170" height="2490" fill="#000" fill-opacity="0.12" filter="url(#shd2)"/>
<g id="panel">
<rect x="1777" y="349" width="1161" height="2498" rx="7" fill="#efefef"/>
<path d="M1784 350.5 L2931 350.5" stroke="#b9b9b9" stroke-width="3"/>
<path d="M2896 370 L2924 396 M2924 370 L2896 396" stroke="#333" stroke-width="6"/>
<rect x="1799" y="419.5" width="1119" height="250" fill="none" stroke="#cdcdcd" stroke-width="3"/>
<rect x="1810" y="430" width="230" height="229" fill="#fff" stroke="#cfcfcf" stroke-width="3"/>
<path d="M2885 542 L2913 542 L2899 556 Z" fill="#333"/>
<rect x="1801" y="681" width="823" height="75" fill="#fff" stroke="#cfcfcf" stroke-width="3"/>
<path d="M2582 711 L2595 725 L2608 711" fill="none" stroke="#555" stroke-width="3"/>

<g id="thumb">
<path d="M1950 448 L1935 466 L1905 503 L1886 511 L1881 522 L1889 538 L1900 562 L1912 600 L1906 612 L1920 624 L1937 636 L1952 626 L1970 621 L1971 600 L1963 588 L1962 470 L1966 452 L1958 438 Z" fill="#121210"/>
<path d="M1955 456 L1889 516" stroke="#a99a5e" stroke-width="7" stroke-linecap="round"/>
<rect x="1949" y="488" width="9" height="100" fill="#d6c88e"/>
<path d="M1889 530 L1899 532 L1946 596 L1933 612 L1913 600 Z" fill="#e6d9a0"/>
<ellipse cx="1956" cy="446" rx="8" ry="7" fill="#d8cb8c"/>
<path d="M1916 612 L1964 603 L1964 612 L1922 620 Z" fill="#c9bc80"/>
</g>
<g id="edittype" stroke="#3c3c3c" stroke-width="3" fill="#e6e6e6">
<rect x="2651.5" y="685.5" width="24" height="26"/>
<rect x="2679.5" y="685.5" width="23" height="26"/>
<rect x="2651.5" y="714.5" width="24" height="24"/>
<rect x="2679.5" y="707.5" width="26" height="32" fill="#f4f4f4"/>
<rect x="2684" y="714" width="17" height="6" fill="#2e72c8" stroke="none"/>
<path d="M2685 728 L2699 728 M2695 724 L2699 728 L2695 732" stroke-width="2" fill="none"/>
</g>
<rect x="1796" y="763" width="1124" height="1973" fill="#fff"/>
<rect x="1796" y="764.0" width="1124" height="63.1" fill="#dadada"/>
<path d="M2878 787.0 L2886 779.0 L2894 787.0 M2878 801.0 L2886 793.0 L2894 801.0" fill="none" stroke="#000" stroke-width="4"/>
<line x1="1796" y1="889.58" x2="2875.5" y2="889.58" stroke="#555" stroke-width="3.2" stroke-dasharray="3.2 3.2"/>
<line x1="2877.5" y1="889.58" x2="2918.5" y2="889.58" stroke="#555" stroke-width="3.2" stroke-dasharray="3.2 3.2"/>
<line x1="2341" y1="827.09" x2="2341" y2="891.1800000000001" stroke="#555" stroke-width="3.2" stroke-dasharray="3.2 3.2"/>
<line x1="2875.5" y1="827.09" x2="2875.5" y2="891.1800000000001" stroke="#555" stroke-width="3.2" stroke-dasharray="3.2 3.2"/>
<line x1="2918.5" y1="827.09" x2="2918.5" y2="891.1800000000001" stroke="#555" stroke-width="3.2" stroke-dasharray="3.2 3.2"/>
<line x1="1796" y1="953.6700000000001" x2="2875.5" y2="953.6700000000001" stroke="#555" stroke-width="3.2" stroke-dasharray="3.2 3.2"/>
<line x1="2877.5" y1="953.6700000000001" x2="2918.5" y2="953.6700000000001" stroke="#555" stroke-width="3.2" stroke-dasharray="3.2 3.2"/>
<line x1="2341" y1="891.1800000000001" x2="2341" y2="955.2700000000001" stroke="#555" stroke-width="3.2" stroke-dasharray="3.2 3.2"/>
<line x1="2875.5" y1="891.1800000000001" x2="2875.5" y2="955.2700000000001" stroke="#555" stroke-width="3.2" stroke-dasharray="3.2 3.2"/>
<line x1="2918.5" y1="891.1800000000001" x2="2918.5" y2="955.2700000000001" stroke="#555" stroke-width="3.2" stroke-dasharray="3.2 3.2"/>
<line x1="1796" y1="1017.76" x2="2875.5" y2="1017.76" stroke="#555" stroke-width="3.2" stroke-dasharray="3.2 3.2"/>
<line x1="2877.5" y1="1017.76" x2="2918.5" y2="1017.76" stroke="#555" stroke-width="3.2" stroke-dasharray="3.2 3.2"/>
<line x1="2341" y1="955.27" x2="2341" y2="1019.36" stroke="#555" stroke-width="3.2" stroke-dasharray="3.2 3.2"/>
<line x1="2875.5" y1="955.27" x2="2875.5" y2="1019.36" stroke="#555" stroke-width="3.2" stroke-dasharray="3.2 3.2"/>
<line x1="2918.5" y1="955.27" x2="2918.5" y2="1019.36" stroke="#555" stroke-width="3.2" stroke-dasharray="3.2 3.2"/>
<line x1="1796" y1="1081.8500000000001" x2="2875.5" y2="1081.8500000000001" stroke="#555" stroke-width="3.2" stroke-dasharray="3.2 3.2"/>
<line x1="2877.5" y1="1081.8500000000001" x2="2918.5" y2="1081.8500000000001" stroke="#555" stroke-width="3.2" stroke-dasharray="3.2 3.2"/>
<line x1="2341" y1="1019.36" x2="2341" y2="1083.45" stroke="#555" stroke-width="3.2" stroke-dasharray="3.2 3.2"/>
<line x1="2875.5" y1="1019.36" x2="2875.5" y2="1083.45" stroke="#555" stroke-width="3.2" stroke-dasharray="3.2 3.2"/>
<line x1="2918.5" y1="1019.36" x2="2918.5" y2="1083.45" stroke="#555" stroke-width="3.2" stroke-dasharray="3.2 3.2"/>
<rect x="1796" y="1084.5" width="1124" height="63.1" fill="#dadada"/>
<path d="M2878 1107.45 L2886 1099.45 L2894 1107.45 M2878 1121.45 L2886 1113.45 L2894 1121.45" fill="none" stroke="#000" stroke-width="4"/>
<line x1="1796" y1="1210.03" x2="2875.5" y2="1210.03" stroke="#555" stroke-width="3.2" stroke-dasharray="3.2 3.2"/>
<line x1="2877.5" y1="1210.03" x2="2918.5" y2="1210.03" stroke="#555" stroke-width="3.2" stroke-dasharray="3.2 3.2"/>
<line x1="2341" y1="1147.54" x2="2341" y2="1211.6299999999999" stroke="#555" stroke-width="3.2" stroke-dasharray="3.2 3.2"/>
<line x1="2875.5" y1="1147.54" x2="2875.5" y2="1211.6299999999999" stroke="#555" stroke-width="3.2" stroke-dasharray="3.2 3.2"/>
<line x1="2918.5" y1="1147.54" x2="2918.5" y2="1211.6299999999999" stroke="#555" stroke-width="3.2" stroke-dasharray="3.2 3.2"/>
<line x1="1796" y1="1274.1200000000001" x2="2875.5" y2="1274.1200000000001" stroke="#555" stroke-width="3.2" stroke-dasharray="3.2 3.2"/>
<line x1="2877.5" y1="1274.1200000000001" x2="2918.5" y2="1274.1200000000001" stroke="#555" stroke-width="3.2" stroke-dasharray="3.2 3.2"/>
<line x1="2341" y1="1211.63" x2="2341" y2="1275.72" stroke="#555" stroke-width="3.2" stroke-dasharray="3.2 3.2"/>
<line x1="2875.5" y1="1211.63" x2="2875.5" y2="1275.72" stroke="#555" stroke-width="3.2" stroke-dasharray="3.2 3.2"/>
<line x1="2918.5" y1="1211.63" x2="2918.5" y2="1275.72" stroke="#555" stroke-width="3.2" stroke-dasharray="3.2 3.2"/>
<line x1="1796" y1="1338.21" x2="2875.5" y2="1338.21" stroke="#555" stroke-width="3.2" stroke-dasharray="3.2 3.2"/>
<line x1="2877.5" y1="1338.21" x2="2918.5" y2="1338.21" stroke="#555" stroke-width="3.2" stroke-dasharray="3.2 3.2"/>
<line x1="2341" y1="1275.72" x2="2341" y2="1339.81" stroke="#555" stroke-width="3.2" stroke-dasharray="3.2 3.2"/>
<line x1="2875.5" y1="1275.72" x2="2875.5" y2="1339.81" stroke="#555" stroke-width="3.2" stroke-dasharray="3.2 3.2"/>
<line x1="2918.5" y1="1275.72" x2="2918.5" y2="1339.81" stroke="#555" stroke-width="3.2" stroke-dasharray="3.2 3.2"/>
<text x="2494.5" y="1360.8" font-size="22" fill="#6d6d6d">3</text>
<line x1="1796" y1="1402.3" x2="2875.5" y2="1402.3" stroke="#555" stroke-width="3.2" stroke-dasharray="3.2 3.2"/>
<line x1="2877.5" y1="1402.3" x2="2918.5" y2="1402.3" stroke="#555" stroke-width="3.2" stroke-dasharray="3.2 3.2"/>
<line x1="2341" y1="1339.81" x2="2341" y2="1403.8999999999999" stroke="#555" stroke-width="3.2" stroke-dasharray="3.2 3.2"/>
<line x1="2875.5" y1="1339.81" x2="2875.5" y2="1403.8999999999999" stroke="#555" stroke-width="3.2" stroke-dasharray="3.2 3.2"/>
<line x1="2918.5" y1="1339.81" x2="2918.5" y2="1403.8999999999999" stroke="#555" stroke-width="3.2" stroke-dasharray="3.2 3.2"/>
<rect x="1796" y="1404.9" width="1124" height="63.1" fill="#dadada"/>
<path d="M2878 1427.9 L2886 1419.9 L2894 1427.9 M2878 1441.9 L2886 1433.9 L2894 1441.9" fill="none" stroke="#000" stroke-width="4"/>
<line x1="1796" y1="1530.48" x2="2875.5" y2="1530.48" stroke="#555" stroke-width="3.2" stroke-dasharray="3.2 3.2"/>
<line x1="2877.5" y1="1530.48" x2="2918.5" y2="1530.48" stroke="#555" stroke-width="3.2" stroke-dasharray="3.2 3.2"/>
<line x1="2341" y1="1467.99" x2="2341" y2="1532.08" stroke="#555" stroke-width="3.2" stroke-dasharray="3.2 3.2"/>
<line x1="2875.5" y1="1467.99" x2="2875.5" y2="1532.08" stroke="#555" stroke-width="3.2" stroke-dasharray="3.2 3.2"/>
<line x1="2918.5" y1="1467.99" x2="2918.5" y2="1532.08" stroke="#555" stroke-width="3.2" stroke-dasharray="3.2 3.2"/>
<line x1="1796" y1="1594.57" x2="2875.5" y2="1594.57" stroke="#555" stroke-width="3.2" stroke-dasharray="3.2 3.2"/>
<line x1="2877.5" y1="1594.57" x2="2918.5" y2="1594.57" stroke="#555" stroke-width="3.2" stroke-dasharray="3.2 3.2"/>
<line x1="2341" y1="1532.08" x2="2341" y2="1596.1699999999998" stroke="#555" stroke-width="3.2" stroke-dasharray="3.2 3.2"/>
<line x1="2875.5" y1="1532.08" x2="2875.5" y2="1596.1699999999998" stroke="#555" stroke-width="3.2" stroke-dasharray="3.2 3.2"/>
<line x1="2918.5" y1="1532.08" x2="2918.5" y2="1596.1699999999998" stroke="#555" stroke-width="3.2" stroke-dasharray="3.2 3.2"/>
<line x1="1796" y1="1658.66" x2="2875.5" y2="1658.66" stroke="#555" stroke-width="3.2" stroke-dasharray="3.2 3.2"/>
<line x1="2877.5" y1="1658.66" x2="2918.5" y2="1658.66" stroke="#555" stroke-width="3.2" stroke-dasharray="3.2 3.2"/>
<line x1="2341" y1="1596.17" x2="2341" y2="1660.26" stroke="#555" stroke-width="3.2" stroke-dasharray="3.2 3.2"/>
<line x1="2875.5" y1="1596.17" x2="2875.5" y2="1660.26" stroke="#555" stroke-width="3.2" stroke-dasharray="3.2 3.2"/>
<line x1="2918.5" y1="1596.17" x2="2918.5" y2="1660.26" stroke="#555" stroke-width="3.2" stroke-dasharray="3.2 3.2"/>
<rect x="1796" y="1661.3" width="1124" height="63.1" fill="#dadada"/>
<path d="M2878 1684.26 L2886 1676.26 L2894 1684.26 M2878 1698.26 L2886 1690.26 L2894 1698.26" fill="none" stroke="#000" stroke-width="4"/>
<line x1="1796" y1="1786.84" x2="2875.5" y2="1786.84" stroke="#555" stroke-width="3.2" stroke-dasharray="3.2 3.2"/>
<line x1="2877.5" y1="1786.84" x2="2918.5" y2="1786.84" stroke="#555" stroke-width="3.2" stroke-dasharray="3.2 3.2"/>
<line x1="2341" y1="1724.35" x2="2341" y2="1788.4399999999998" stroke="#555" stroke-width="3.2" stroke-dasharray="3.2 3.2"/>
<line x1="2875.5" y1="1724.35" x2="2875.5" y2="1788.4399999999998" stroke="#555" stroke-width="3.2" stroke-dasharray="3.2 3.2"/>
<line x1="2918.5" y1="1724.35" x2="2918.5" y2="1788.4399999999998" stroke="#555" stroke-width="3.2" stroke-dasharray="3.2 3.2"/>
<line x1="1796" y1="1850.93" x2="2875.5" y2="1850.93" stroke="#555" stroke-width="3.2" stroke-dasharray="3.2 3.2"/>
<line x1="2877.5" y1="1850.93" x2="2918.5" y2="1850.93" stroke="#555" stroke-width="3.2" stroke-dasharray="3.2 3.2"/>
<line x1="2341" y1="1788.44" x2="2341" y2="1852.53" stroke="#555" stroke-width="3.2" stroke-dasharray="3.2 3.2"/>
<line x1="2875.5" y1="1788.44" x2="2875.5" y2="1852.53" stroke="#555" stroke-width="3.2" stroke-dasharray="3.2 3.2"/>
<line x1="2918.5" y1="1788.44" x2="2918.5" y2="1852.53" stroke="#555" stroke-width="3.2" stroke-dasharray="3.2 3.2"/>
<rect x="2343.5" y="893.5" width="529" height="56" fill="none" stroke="#000" stroke-width="4"/>
<rect x="1805" y="2799" width="282" height="3.5" fill="#0a64c8"/>
<rect x="2656" y="2750" width="254" height="67" rx="5" fill="#f8f8f8"/>
<text x="1785.0" y="397.0" font-size="42" fill="#333" stroke="#333" stroke-width="0.25" textLength="192.4" lengthAdjust="spacingAndGlyphs">Properties</text>
<text x="2057.0" y="534.0" font-size="42" fill="#333" stroke="#333" stroke-width="0.25" textLength="523.5" lengthAdjust="spacingAndGlyphs">RD_Music Instruments Harp</text>
<text x="2056.5" y="590.0" font-size="42" fill="#333" stroke="#333" stroke-width="0.25" textLength="91.9" lengthAdjust="spacingAndGlyphs">Gold</text>
<text x="1810.0" y="734.0" font-size="42" fill="#000" stroke="#000" stroke-width="0.25" textLength="356.1" lengthAdjust="spacingAndGlyphs">Generic Models (1)</text>
<text x="2723.1" y="726.0" font-size="42" fill="#000" stroke="#000" stroke-width="0.25" textLength="170.2" lengthAdjust="spacingAndGlyphs">Edit Type</text>
<text x="1802.0" y="2796.0" font-size="42" fill="#0a64c8" stroke="#0a64c8" stroke-width="0.25" textLength="285.5" lengthAdjust="spacingAndGlyphs">Properties help</text>
<text x="2727.0" y="2800.0" font-size="42" fill="#707070" stroke="#707070" stroke-width="0.25" textLength="110.1" lengthAdjust="spacingAndGlyphs">Apply</text>
<text x="1803.7" y="808.5" font-size="42" fill="#000" stroke="#000" stroke-width="0.25" textLength="216.2" lengthAdjust="spacingAndGlyphs">Constraints</text>
<text x="1802.6" y="1129.0" font-size="42" fill="#000" stroke="#000" stroke-width="0.25" textLength="223.5" lengthAdjust="spacingAndGlyphs">Dimensions</text>
<text x="1801.6" y="1449.4" font-size="42" fill="#000" stroke="#000" stroke-width="0.25" textLength="239.9" lengthAdjust="spacingAndGlyphs">Identity Data</text>
<text x="1802.7" y="1705.8" font-size="42" fill="#000" stroke="#000" stroke-width="0.25" textLength="153.1" lengthAdjust="spacingAndGlyphs">Phasing</text>
<text x="1824.0" y="869.6" font-size="42" fill="#6d6d6d" stroke="#6d6d6d" stroke-width="0.25" textLength="282.1" lengthAdjust="spacingAndGlyphs">Schedule Level</text>
<text x="2348.7" y="869.6" font-size="42" fill="#6d6d6d" stroke="#6d6d6d" stroke-width="0.25" textLength="126.6" lengthAdjust="spacingAndGlyphs">Level 1</text>
<text x="1823.0" y="933.7" font-size="42" fill="#000" stroke="#000" stroke-width="0.25" textLength="385.6" lengthAdjust="spacingAndGlyphs">Elevation from Level</text>
<text x="2349.7" y="933.7" font-size="42" fill="#000" stroke="#000" stroke-width="0.25" textLength="74.9" lengthAdjust="spacingAndGlyphs">0.00</text>
<text x="1826.0" y="997.8" font-size="42" fill="#6d6d6d" stroke="#6d6d6d" stroke-width="0.25" textLength="213.9" lengthAdjust="spacingAndGlyphs">Work Plane</text>
<text x="2348.7" y="997.8" font-size="42" fill="#6d6d6d" stroke="#6d6d6d" stroke-width="0.25" textLength="254.8" lengthAdjust="spacingAndGlyphs">Level : Level 1</text>
<text x="1823.9" y="1061.9" font-size="42" fill="#000" stroke="#000" stroke-width="0.25" textLength="318.8" lengthAdjust="spacingAndGlyphs">Offset from Host</text>
<text x="2349.7" y="1061.9" font-size="42" fill="#000" stroke="#000" stroke-width="0.25" textLength="74.9" lengthAdjust="spacingAndGlyphs">0.00</text>
<text x="1826.0" y="1190.0" font-size="42" fill="#6d6d6d" stroke="#6d6d6d" stroke-width="0.25" textLength="114.2" lengthAdjust="spacingAndGlyphs">Width</text>
<text x="2348.7" y="1190.0" font-size="42" fill="#6d6d6d" stroke="#6d6d6d" stroke-width="0.25" textLength="119.7" lengthAdjust="spacingAndGlyphs">100.08</text>
<text x="1822.8" y="1254.1" font-size="42" fill="#6d6d6d" stroke="#6d6d6d" stroke-width="0.25" textLength="118.1" lengthAdjust="spacingAndGlyphs">Depth</text>
<text x="2349.6" y="1254.1" font-size="42" fill="#6d6d6d" stroke="#6d6d6d" stroke-width="0.25" textLength="97.4" lengthAdjust="spacingAndGlyphs">52.20</text>
<text x="1822.8" y="1318.2" font-size="42" fill="#6d6d6d" stroke="#6d6d6d" stroke-width="0.25" textLength="130.7" lengthAdjust="spacingAndGlyphs">Height</text>
<text x="2348.7" y="1318.2" font-size="42" fill="#6d6d6d" stroke="#6d6d6d" stroke-width="0.25" textLength="119.7" lengthAdjust="spacingAndGlyphs">179.76</text>
<text x="1826.0" y="1382.3" font-size="42" fill="#6d6d6d" stroke="#6d6d6d" stroke-width="0.25" textLength="148.2" lengthAdjust="spacingAndGlyphs">Volume</text>
<text x="2349.5" y="1382.3" font-size="42" fill="#6d6d6d" stroke="#6d6d6d" stroke-width="0.25" textLength="150.2" lengthAdjust="spacingAndGlyphs">0.082 m</text>
<text x="1821.8" y="1510.5" font-size="42" fill="#000" stroke="#000" stroke-width="0.25" textLength="122.0" lengthAdjust="spacingAndGlyphs">Image</text>
<text x="1823.9" y="1574.6" font-size="42" fill="#000" stroke="#000" stroke-width="0.25" textLength="212.7" lengthAdjust="spacingAndGlyphs">Comments</text>
<text x="1822.8" y="1638.7" font-size="42" fill="#000" stroke="#000" stroke-width="0.25" textLength="99.6" lengthAdjust="spacingAndGlyphs">Mark</text>
<text x="1823.1" y="1766.8" font-size="42" fill="#000" stroke="#000" stroke-width="0.25" textLength="271.4" lengthAdjust="spacingAndGlyphs">Phase Created</text>
<text x="2348.4" y="1766.8" font-size="42" fill="#000" stroke="#000" stroke-width="0.25" textLength="345.5" lengthAdjust="spacingAndGlyphs">New Construction</text>
<text x="1823.0" y="1830.9" font-size="42" fill="#000" stroke="#000" stroke-width="0.25" textLength="350.1" lengthAdjust="spacingAndGlyphs">Phase Demolished</text>
<text x="2348.3" y="1830.9" font-size="42" fill="#000" stroke="#000" stroke-width="0.25" textLength="106.4" lengthAdjust="spacingAndGlyphs">None</text>
</g>
<rect width="3200" height="3200" fill="url(#wm)"/>
</svg>
</body></html>
